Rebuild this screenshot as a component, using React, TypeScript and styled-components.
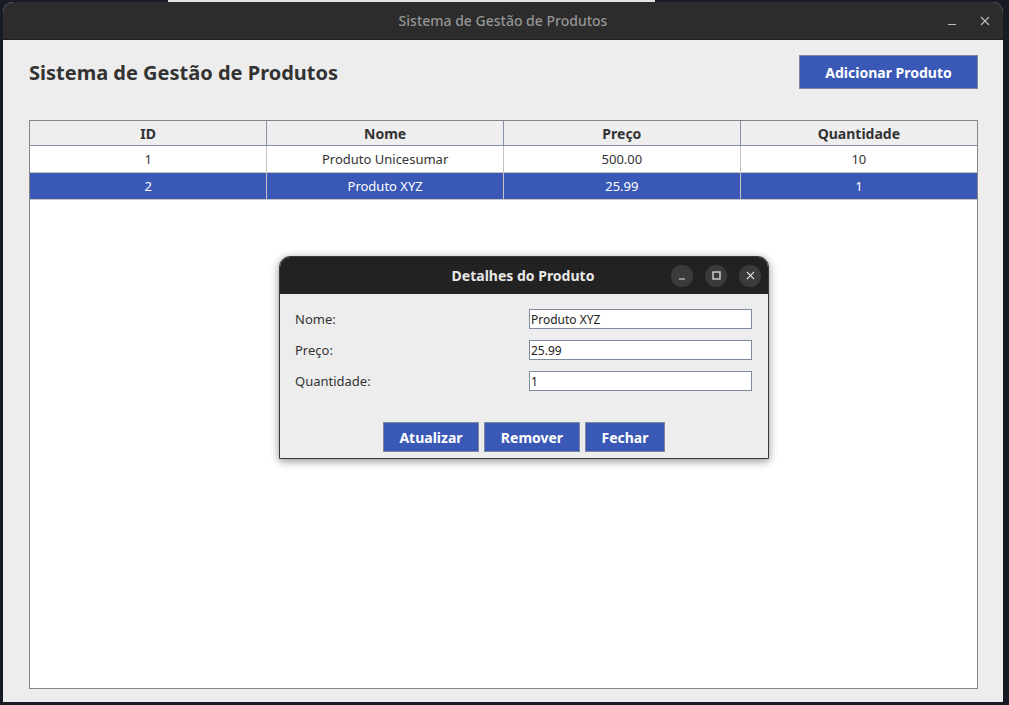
import styled, { createGlobalStyle } from 'styled-components'

const GlobalStyle = createGlobalStyle`
  html, body {
    margin: 0;
    padding: 0;
    background: #171c24;
    font-family: "Noto Sans", "Open Sans", sans-serif;
  }
`

const Desktop = styled.div`
  width: 1009px;
  height: 705px;
  box-sizing: border-box;
  padding: 2px 0 0 3px;
  background-color: #171c24;
  background-image: linear-gradient(#e4e4e4, #e4e4e4);
  background-repeat: no-repeat;
  background-position: 168px 0;
  background-size: 487px 2px;
  overflow: hidden;
`

const Window = styled.div`
  position: relative;
  width: 1000px;
  height: 700px;
  display: flex;
  flex-direction: column;
  border-radius: 10px 10px 0 0;
  overflow: hidden;
  background: #ededed;
`

const TitleBar = styled.div`
  height: 38px;
  flex: none;
  background: #2c2c2c;
  border-bottom: 1px solid #1e1e1e;
  box-sizing: border-box;
  display: flex;
  align-items: center;
  justify-content: center;
  position: relative;
`

const TitleText = styled.span`
  color: #959595;
  font-size: 14px;
  font-weight: 500;
  font-family: "Noto Sans", sans-serif;
`

const TitleControls = styled.div`
  position: absolute;
  right: 8px;
  top: 0;
  height: 100%;
  display: flex;
  align-items: center;
  gap: 13px;
`

const PlainControl = styled.div`
  width: 20px;
  height: 20px;
  display: flex;
  align-items: center;
  justify-content: center;
`

const Content = styled.div`
  flex: 1;
  display: flex;
  flex-direction: column;
  padding: 15px 25px 13px 26px;
  box-sizing: border-box;
`

const HeaderRow = styled.div`
  display: flex;
  justify-content: space-between;
  align-items: center;
  height: 34px;
  margin-bottom: 31px;
`

const Heading = styled.h1`
  margin: 0;
  font-size: 20px;
  font-weight: 700;
  color: #333;
`

const PrimaryButton = styled.button<{ $w?: number; $h?: number }>`
  background: #3a59b7;
  color: #fff;
  border: 1px solid #7d8799;
  font-family: "Noto Sans", sans-serif;
  font-weight: 700;
  font-size: 14px;
  height: ${p => (p.$h ? p.$h : 34)}px;
  width: ${p => (p.$w ? p.$w : 179)}px;
  padding: 0;
  cursor: pointer;
`

const TableBox = styled.div`
  flex: 1;
  border: 1px solid #868686;
  background: #fff;
`

const Table = styled.table`
  width: 100%;
  border-collapse: collapse;
  table-layout: fixed;
  font-size: 13px;
`

const HeadCell = styled.th`
  height: 24px;
  padding: 0;
  background: #eeeeee;
  color: #333;
  font-weight: 700;
  font-size: 14px;
  border-right: 1px solid #8592a4;
  border-bottom: 1px solid #8592a4;
  &:last-child {
    border-right: none;
  }
`

const Row = styled.tr<{ $selected?: boolean }>`
  background: ${p => (p.$selected ? '#3a59b7' : '#fff')};
  color: ${p => (p.$selected ? '#fff' : '#333')};
`

const Cell = styled.td`
  height: 26px;
  padding: 0;
  text-align: center;
  border-right: 1px solid #c4c4c4;
  border-bottom: 1px solid #c4c4c4;
  &:last-child {
    border-right: none;
  }
`

const Dialog = styled.div`
  position: absolute;
  left: 276px;
  top: 254px;
  width: 490px;
  border-radius: 11px 11px 0 0;
  overflow: hidden;
  box-shadow: 0 2px 8px rgba(0, 0, 0, 0.45);
  background: #ededed;
  border: 1px solid #3a3a3a;
  box-sizing: border-box;
`

const DialogBar = styled.div`
  height: 37px;
  background: #222;
  display: flex;
  align-items: center;
  justify-content: center;
  position: relative;
`

const DialogTitle = styled.span`
  color: #e8e8e8;
  font-weight: 700;
  font-size: 14px;
  margin-left: -2px;
`

const DialogControls = styled.div`
  position: absolute;
  right: 7px;
  top: 0;
  height: 100%;
  display: flex;
  align-items: center;
  gap: 12px;
`

const RoundControl = styled.div`
  width: 22px;
  height: 22px;
  border-radius: 50%;
  background: #3b3b3b;
  display: flex;
  align-items: center;
  justify-content: center;
`

const Form = styled.div`
  padding: 15px 16px 0 15px;
  display: flex;
  flex-direction: column;
  gap: 11px;
`

const Field = styled.div`
  display: grid;
  grid-template-columns: 234px 223px;
  align-items: center;
  height: 20px;
`

const Label = styled.label`
  font-size: 13px;
  color: #333;
`

const Input = styled.input`
  height: 20px;
  box-sizing: border-box;
  border: 1px solid #7d8a9c;
  background: #fff;
  padding: 0 1px;
  font-family: "Noto Sans", sans-serif;
  font-size: 12px;
  color: #222;
  outline: none;
`

const Buttons = styled.div`
  display: flex;
  justify-content: center;
  gap: 5px;
  padding: 31px 0 6px 0;
`

const X = ({ size, color }: { size: number; color: string }) => (
  <svg width={size} height={size} viewBox="0 0 10 10">
    <path d="M1 1 L9 9 M9 1 L1 9" stroke={color} strokeWidth="1.2" />
  </svg>
)

const rows = [
  { id: 1, nome: 'Produto Unicesumar', preco: '500.00', qtd: 10 },
  { id: 2, nome: 'Produto XYZ', preco: '25.99', qtd: 1 },
]

export default function App() {
  return (
    <Desktop>
      <GlobalStyle />
      <Window>
        <TitleBar>
          <TitleText>Sistema de Gestão de Produtos</TitleText>
          <TitleControls>
            <PlainControl>
              <svg width="10" height="10" viewBox="0 0 10 10">
                <path d="M1 8.5 H9" stroke="#bbb" strokeWidth="1.2" />
              </svg>
            </PlainControl>
            <PlainControl>
              <X size={10} color="#bbb" />
            </PlainControl>
          </TitleControls>
        </TitleBar>
        <Content>
          <HeaderRow>
            <Heading>Sistema de Gestão de Produtos</Heading>
            <PrimaryButton>Adicionar Produto</PrimaryButton>
          </HeaderRow>
          <TableBox>
            <Table>
              <thead>
                <tr>
                  <HeadCell>ID</HeadCell>
                  <HeadCell>Nome</HeadCell>
                  <HeadCell>Preço</HeadCell>
                  <HeadCell>Quantidade</HeadCell>
                </tr>
              </thead>
              <tbody>
                {rows.map(r => (
                  <Row key={r.id} $selected={r.id === 2}>
                    <Cell>{r.id}</Cell>
                    <Cell>{r.nome}</Cell>
                    <Cell>{r.preco}</Cell>
                    <Cell>{r.qtd}</Cell>
                  </Row>
                ))}
              </tbody>
            </Table>
          </TableBox>
        </Content>
        <Dialog>
          <DialogBar>
            <DialogTitle>Detalhes do Produto</DialogTitle>
            <DialogControls>
              <RoundControl>
                <svg width="8" height="8" viewBox="0 0 8 8">
                  <path d="M1 7 H7" stroke="#eee" strokeWidth="1.2" />
                </svg>
              </RoundControl>
              <RoundControl>
                <svg width="9" height="9" viewBox="0 0 9 9">
                  <rect x="1" y="1" width="7" height="7" fill="none" stroke="#eee" strokeWidth="1.2" />
                </svg>
              </RoundControl>
              <RoundControl>
                <X size={9} color="#eee" />
              </RoundControl>
            </DialogControls>
          </DialogBar>
          <Form>
            <Field>
              <Label>Nome:</Label>
              <Input defaultValue="Produto XYZ" />
            </Field>
            <Field>
              <Label>Preço:</Label>
              <Input defaultValue="25.99" />
            </Field>
            <Field>
              <Label>Quantidade:</Label>
              <Input defaultValue="1" />
            </Field>
          </Form>
          <Buttons>
            <PrimaryButton $w={96} $h={30}>Atualizar</PrimaryButton>
            <PrimaryButton $w={96} $h={30}>Remover</PrimaryButton>
            <PrimaryButton $w={80} $h={30}>Fechar</PrimaryButton>
          </Buttons>
        </Dialog>
      </Window>
    </Desktop>
  )
}
